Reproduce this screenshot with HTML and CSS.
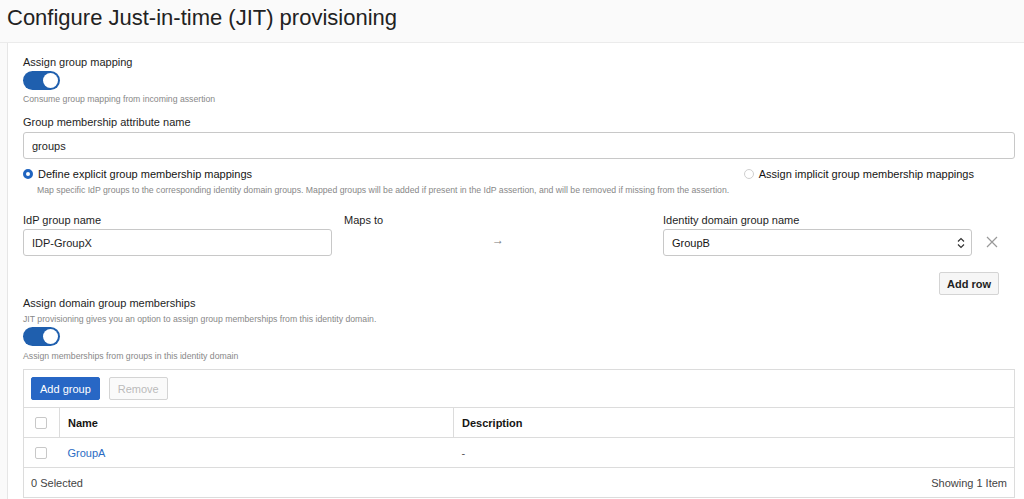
FILE: index.html
```html
<!DOCTYPE html>
<html>
  <head>
    <meta charset="utf-8">
    <title>Configure Just-in-time (JIT) provisioning</title>
    <link rel="stylesheet" href="styles.css">
  </head>
  <body>
    <div class="page-head">
      <h1>Configure Just-in-time (JIT) provisioning</h1>
    </div>
    <div class="panel">
      <div class="field">
        <label class="label">Assign group mapping</label>
        <span class="toggle"><span class="knob"></span></span>
        <div class="hint">Consume group mapping from incoming assertion</div>
      </div>

      <div class="field">
        <label class="label" for="attr">Group membership attribute name</label>
        <input class="input wide" type="text" id="attr" value="groups">
      </div>

      <div class="radios">
        <div class="radio-item">
          <div class="radio-line"><span class="radio on"></span>Define explicit group membership mappings</div>
          <div class="radio-hint">Map specific IdP groups to the corresponding identity domain groups. Mapped groups will be added if present in the IdP assertion, and will be removed if missing from the assertion.</div>
        </div>
        <div class="radio-item right">
          <div class="radio-line"><span class="radio"></span>Assign implicit group membership mappings</div>
        </div>
      </div>

      <div class="mapping">
        <div class="col">
          <label class="label">IdP group name</label>
          <input class="input" type="text" value="IDP-GroupX">
        </div>
        <div class="col middle">
          <label class="label">Maps to</label>
          <span class="arrow">&rarr;</span>
        </div>
        <div class="col">
          <label class="label">Identity domain group name</label>
          <div class="select">GroupB
            <svg class="chev" width="8" height="12" viewBox="0 0 8 12"><path d="M1 4.5 4 1.5 7 4.5M1 7.5 4 10.5 7 7.5" fill="none" stroke="#333" stroke-width="1.2"/></svg>
          </div>
        </div>
        <svg class="close" width="12" height="12" viewBox="0 0 12 12"><path d="M1 1 11 11M11 1 1 11" stroke="#999" stroke-width="1.2"/></svg>
      </div>

      <div class="row-actions">
        <button class="btn">Add row</button>
      </div>

      <div class="field domain">
        <label class="label">Assign domain group memberships</label>
        <div class="hint top">JIT provisioning gives you an option to assign group memberships from this identity domain.</div>
        <span class="toggle"><span class="knob"></span></span>
        <div class="hint">Assign memberships from groups in this identity domain</div>
      </div>

      <div class="grid">
        <div class="toolbar">
          <button class="btn primary">Add group</button>
          <button class="btn disabled">Remove</button>
        </div>
        <table>
          <tr class="head">
            <th class="check"><span class="box"></span></th>
            <th class="name">Name</th>
            <th>Description</th>
          </tr>
          <tr>
            <td class="check"><span class="box"></span></td>
            <td class="name"><a href="#">GroupA</a></td>
            <td>-</td>
          </tr>
        </table>
        <div class="grid-foot">
          <span>0 Selected</span>
          <span>Showing 1 Item</span>
        </div>
      </div>
    </div>
  </body>
</html>
```

FILE: styles.css
```css
body {
  margin: 0;
  font-family: "Liberation Sans", Arial, sans-serif;
  color: #161513;
  background: #fafafa;
}

.page-head {
  height: 42px;
  border-bottom: 1px solid #ebebeb;
  padding-left: 7px;
}

.page-head h1 {
  margin: 0;
  font-size: 22px;
  font-weight: normal;
  line-height: 36px;
  color: #222;
}

.panel {
  margin-left: 7px;
  border-left: 1px solid #e6e6e6;
  background: #fff;
  padding: 10px 10px 0 15px;
  height: 446px;
  overflow: hidden;
}

.field {
  display: flex;
  flex-direction: column;
  align-items: flex-start;
  margin-bottom: 8px;
}

.label {
  font-size: 11px;
  line-height: 18px;
  color: #1e1e1e;
}

.hint {
  font-size: 8.7px;
  color: #888;
  margin-top: 4px;
  line-height: 11px;
}

.hint.top {
  margin: 2px 0 2px;
}

.toggle {
  width: 37px;
  height: 19px;
  background: #1f5fae;
  border-radius: 10px;
  display: flex;
  justify-content: flex-end;
  align-items: center;
  padding-right: 2px;
  box-sizing: border-box;
}

.knob {
  width: 15px;
  height: 15px;
  border-radius: 50%;
  background: #fff;
}

.input {
  font-family: inherit;
  font-size: 11px;
  color: #1e1e1e;
  height: 27px;
  box-sizing: border-box;
  border: 1px solid #c8c8c8;
  border-radius: 3px;
  padding: 0 8px;
  width: 309px;
}

.input.wide {
  width: 992px;
  margin-top: 1px;
}

.radios {
  display: flex;
  justify-content: space-between;
  width: 951px;
  margin-top: 5px;
}

.radio-line {
  display: flex;
  align-items: center;
  font-size: 11px;
  line-height: 14px;
}

.radio {
  width: 8px;
  height: 8px;
  border: 1px solid #cfcfcf;
  border-radius: 50%;
  margin-right: 5px;
  background: #fff;
}

.radio.on {
  border: 3px solid #1f64c0;
  width: 4px;
  height: 4px;
}

.radio-hint {
  font-size: 8.7px;
  line-height: 11px;
  color: #888;
  margin-left: 14px;
  margin-top: 4px;
}

.mapping {
  display: flex;
  align-items: flex-start;
  margin-top: 15px;
}

.col {
  display: flex;
  flex-direction: column;
  width: 309px;
}

.col.middle {
  width: 331px;
  padding-left: 12px;
  box-sizing: border-box;
}

.arrow {
  font-size: 12px;
  color: #777;
  margin: 4px 0 0 148px;
}

.select {
  display: flex;
  justify-content: space-between;
  align-items: center;
  height: 27px;
  box-sizing: border-box;
  border: 1px solid #c8c8c8;
  border-radius: 3px;
  padding: 0 6px 0 8px;
  font-size: 11px;
}

.close {
  margin: 25px 0 0 14px;
}

.row-actions {
  width: 976px;
  display: flex;
  justify-content: flex-end;
  margin-top: 16px;
}

.btn {
  font-family: inherit;
  font-size: 11px;
  font-weight: bold;
  color: #222;
  background: #f6f6f6;
  border: 1px solid #d4d4d4;
  border-radius: 2px;
  height: 23px;
  padding: 0 7px;
}

.field.domain {
  margin-top: -1px;
  margin-bottom: 7px;
}

.field.domain .toggle + .hint {
  margin-top: 5px;
}

.grid {
  width: 992px;
  border: 1px solid #dcdcdc;
  border-bottom: none;
  margin-top: 5px;
  box-sizing: border-box;
}

.toolbar {
  display: flex;
  gap: 9px;
  padding: 7px 7px 7px;
}

.btn.primary {
  background: #2867c5;
  border-color: #2867c5;
  color: #fff;
  font-weight: normal;
  padding: 0 8px;
}

.btn.disabled {
  color: #bbb;
  font-weight: normal;
  background: #fafafa;
  padding: 0 8px;
}

table {
  width: 100%;
  border-collapse: collapse;
  font-size: 11px;
}

th, td {
  text-align: left;
  height: 29px;
  padding: 0 8px;
  border-top: 1px solid #dcdcdc;
}

th {
  font-weight: bold;
}

th + th {
  border-left: 1px solid #dcdcdc;
}

.check {
  width: 24px;
  padding: 0 0 0 11px;
}

.box {
  display: block;
  width: 12px;
  height: 12px;
  border: 1px solid #c8c8c8;
  border-radius: 2px;
  box-sizing: border-box;
}

th.name, td.name {
  width: 377px;
}

td a {
  color: #2b6cc4;
  text-decoration: none;
}

td {
  color: #555;
}

.grid-foot {
  display: flex;
  justify-content: space-between;
  align-items: center;
  height: 29px;
  padding: 0 7px;
  border-top: 1px solid #dcdcdc;
  border-bottom: 1px solid #dcdcdc;
  font-size: 11px;
  color: #444;
}
```
